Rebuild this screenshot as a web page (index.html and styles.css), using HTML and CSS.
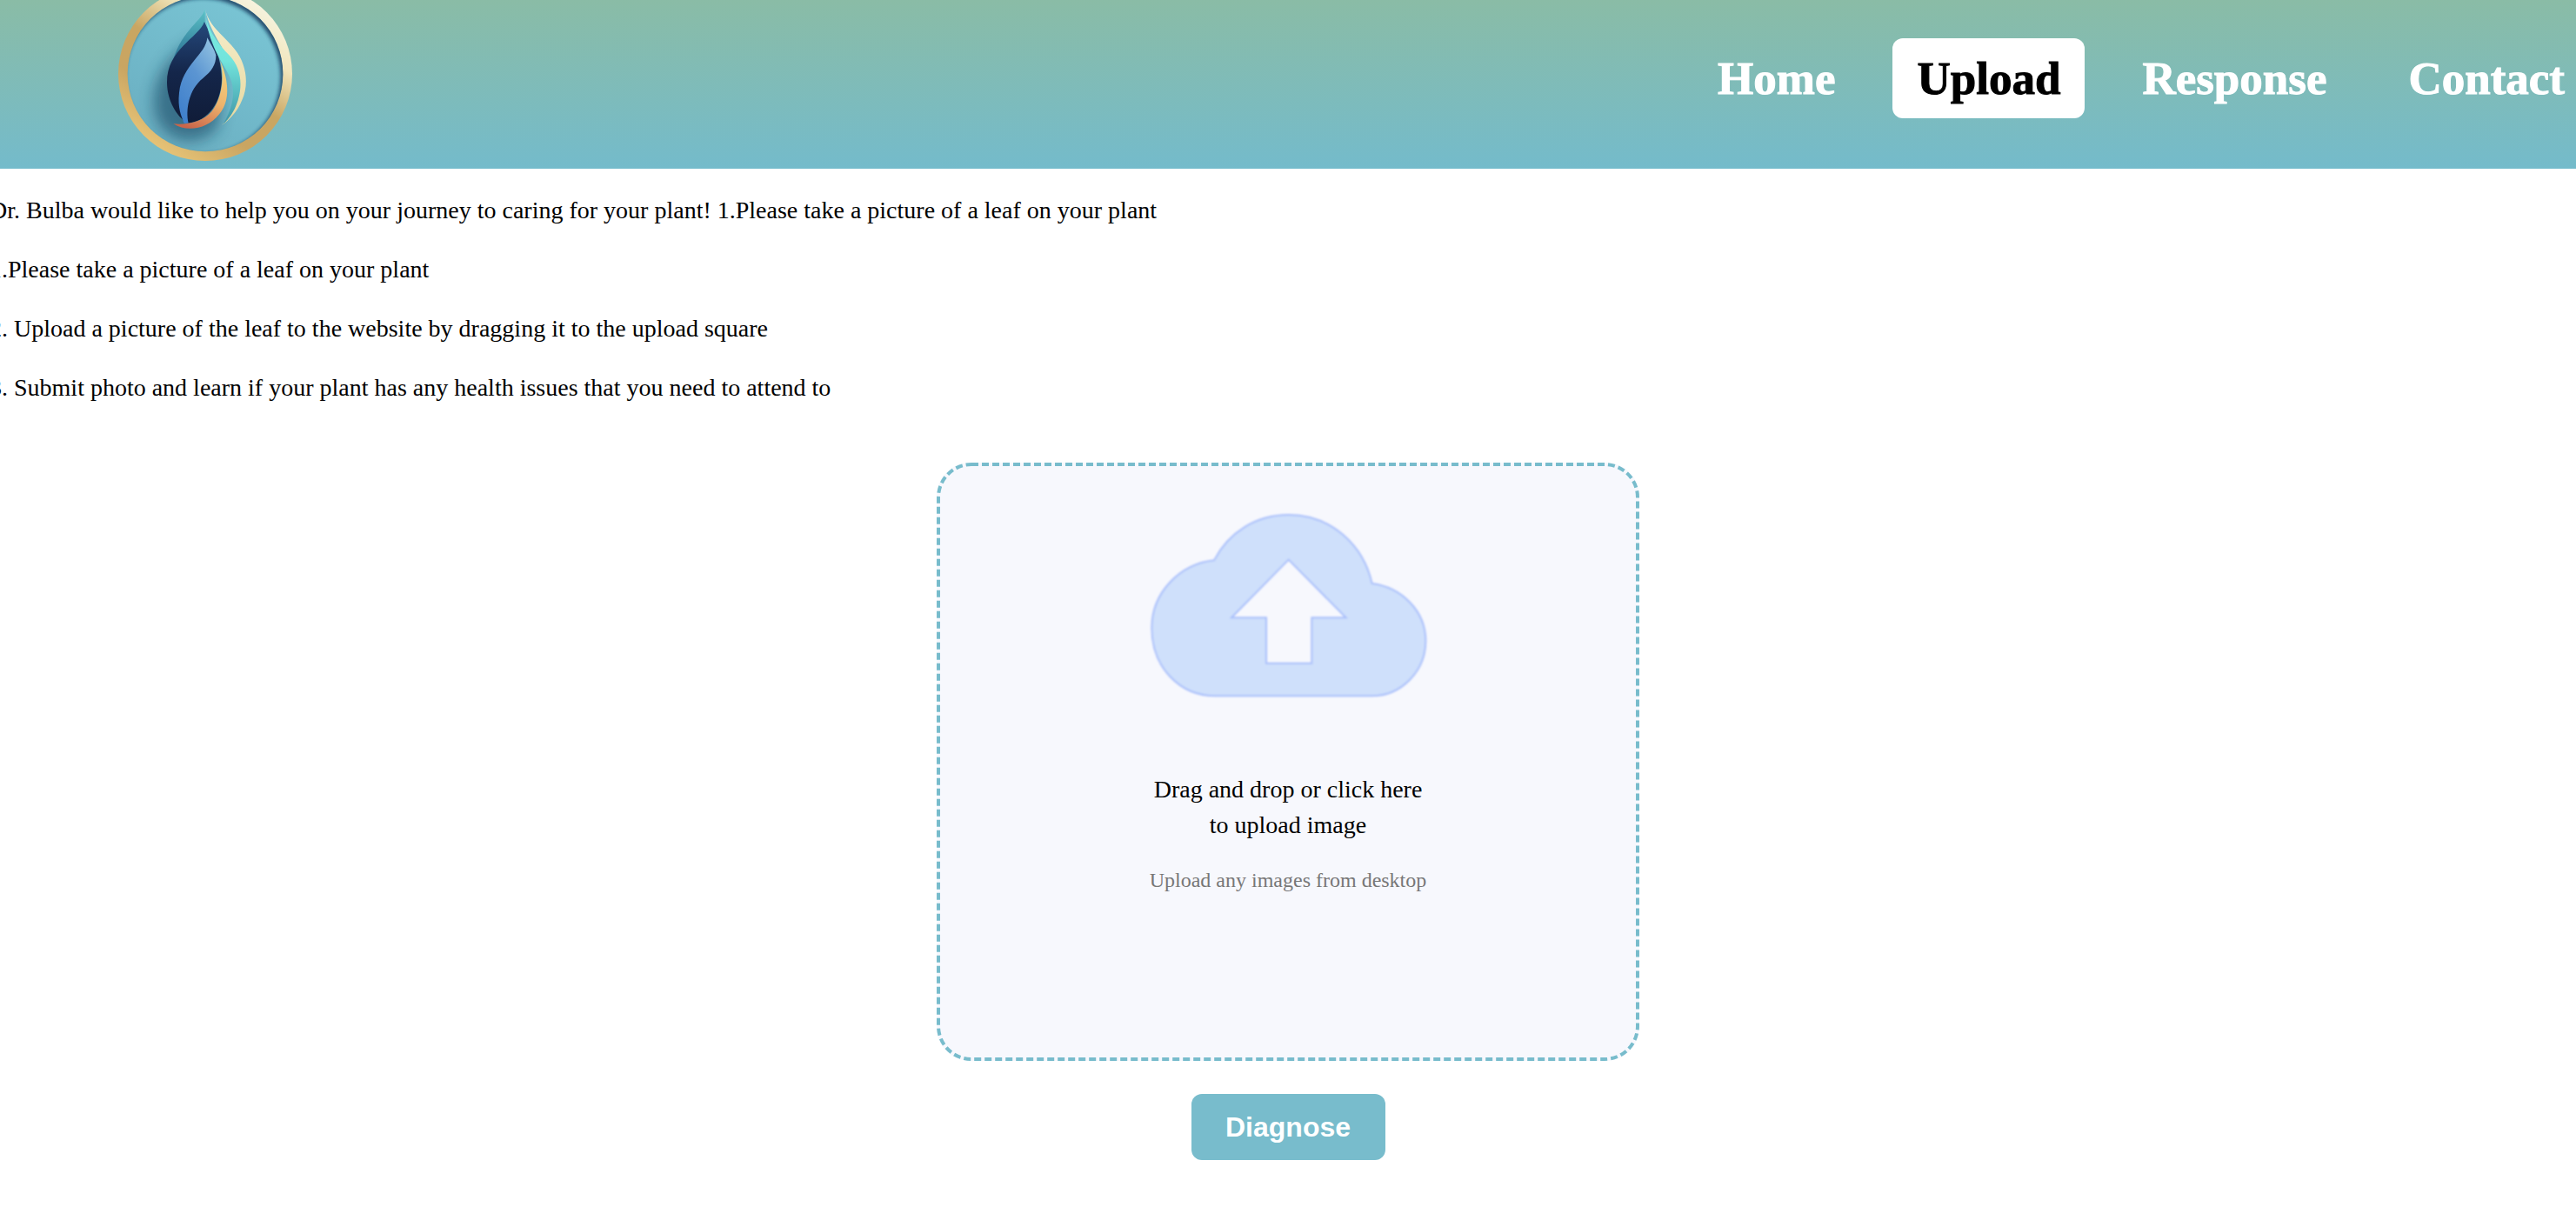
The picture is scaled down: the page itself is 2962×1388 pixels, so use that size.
FILE: index.html
```html
<!DOCTYPE html>
<html lang="en">
<head>
<meta charset="utf-8">
<title>Dr. Bulba - Upload</title>
<link rel="stylesheet" href="styles.css">
</head>
<body>
<header class="site-header">
  <svg class="logo" viewBox="108 -45 600 600" aria-label="Dr. Bulba logo">
    <defs>
      <linearGradient id="ringGrad" x1="0.85" y1="0" x2="0.2" y2="1">
        <stop offset="0" stop-color="#f8f9ee"/>
        <stop offset="0.28" stop-color="#f1e6bc"/>
        <stop offset="0.5" stop-color="#c9a662"/>
        <stop offset="0.7" stop-color="#c9a562"/>
        <stop offset="1" stop-color="#eecb7c"/>
      </linearGradient>
      <linearGradient id="discGrad" x1="0.8" y1="0" x2="0.2" y2="1">
        <stop offset="0" stop-color="#7ac6d5"/>
        <stop offset="1" stop-color="#6aaec1"/>
      </linearGradient>
      <linearGradient id="bodyGrad" x1="0" y1="0" x2="0" y2="1">
        <stop offset="0" stop-color="#25497c"/>
        <stop offset="0.5" stop-color="#14264a"/>
        <stop offset="1" stop-color="#101c38"/>
      </linearGradient>
      <linearGradient id="blueGrad" x1="0.8" y1="0" x2="0.2" y2="1">
        <stop offset="0" stop-color="#8fc0e0"/>
        <stop offset="0.45" stop-color="#5b95d2"/>
        <stop offset="1" stop-color="#3f80cc"/>
      </linearGradient>
      <linearGradient id="tealGrad" x1="0" y1="0" x2="0" y2="1">
        <stop offset="0" stop-color="#5cc4c8"/>
        <stop offset="1" stop-color="#2b6f92"/>
      </linearGradient>
      <linearGradient id="cyanGrad" x1="0" y1="0" x2="0" y2="1">
        <stop offset="0" stop-color="#7cece2"/>
        <stop offset="0.45" stop-color="#72e4dc"/>
        <stop offset="1" stop-color="#3f94a6"/>
      </linearGradient>
      <linearGradient id="creamGrad" x1="0" y1="0" x2="0" y2="1">
        <stop offset="0" stop-color="#f6efce"/>
        <stop offset="1" stop-color="#e6d8a0"/>
      </linearGradient>
      <linearGradient id="orangeGrad" x1="0.7" y1="0" x2="0.3" y2="1">
        <stop offset="0" stop-color="#f0d480"/>
        <stop offset="0.5" stop-color="#eeb36c"/>
        <stop offset="1" stop-color="#c9654a"/>
      </linearGradient>
      <filter id="softShadow" x="-50%" y="-50%" width="200%" height="200%">
        <feGaussianBlur stdDeviation="26"/>
      </filter>
      <filter id="rimShadow" x="-20%" y="-20%" width="140%" height="140%">
        <feGaussianBlur stdDeviation="6"/>
      </filter>
      <clipPath id="discClip"><circle cx="408" cy="255" r="268"/></clipPath>
    </defs>
    <circle cx="408" cy="255" r="300" fill="url(#ringGrad)"/>
    <circle cx="408" cy="255" r="268" fill="url(#discGrad)"/>
    <g clip-path="url(#discClip)">
      <path fill-rule="evenodd" fill="#16375c" opacity="0.85" filter="url(#rimShadow)" d="M60 -90 H760 V600 H60 Z M400 263 m-268 0 a268 268 0 1 0 536 0 a268 268 0 1 0 -536 0 Z"/>
      <path d="M400 130 C290 170 200 290 240 410 C290 510 400 500 450 440 C480 300 450 200 400 130Z" fill="#184562" opacity="0.6" filter="url(#softShadow)"/>
    </g>
    <path d="M407 30 C400 70 330 100 298 205 C330 145 390 115 407 85Z" fill="url(#tealGrad)"/>
    <path d="M405 75 C385 130 275 170 276 285 C277 350 310 400 345 425 C420 420 465 350 465 270 C465 200 430 130 405 75Z" fill="url(#bodyGrad)"/>
    <path d="M415 130 C410 190 330 220 318 320 C312 370 325 400 335 425 L350 425 C340 380 350 310 400 270 C430 245 445 225 445 190 C440 170 425 150 415 130Z" fill="url(#blueGrad)"/>
    <path d="M407 30 C420 90 470 120 510 170 C550 220 560 290 535 345 C520 385 490 415 465 432 C500 400 530 340 525 290 C520 220 430 140 407 30Z" fill="url(#creamGrad)"/>
    <path d="M407 30 C405 80 440 140 490 190 C530 230 535 285 525 330 C515 375 495 405 470 428 C505 370 515 310 490 260 C465 210 415 150 407 30Z" fill="url(#cyanGrad)"/>
    <path d="M460 210 C490 280 495 350 455 395 C420 440 350 460 298 427 C345 432 400 420 430 385 C465 340 475 270 460 210Z" fill="url(#orangeGrad)"/>
  </svg>
  <nav class="main-nav">
    <a class="nav-link" href="#">Home</a>
    <a class="nav-link is-active" href="#">Upload</a>
    <a class="nav-link" href="#">Response</a>
    <a class="nav-link" href="#">Contact</a>
  </nav>
</header>
<main class="page">
  <section class="intro">
    <p>Dr. Bulba would like to help you on your journey to caring for your plant! 1.Please take a picture of a leaf on your plant</p>
    <p>1.Please take a picture of a leaf on your plant</p>
    <p>2. Upload a picture of the leaf to the website by dragging it to the upload square</p>
    <p>3. Submit photo and learn if your plant has any health issues that you need to attend to</p>
  </section>
  <section class="dropzone">
    <svg class="dash-frame" viewBox="0 0 808 688">
      <rect x="2" y="2" width="804" height="684" rx="38" ry="38"/>
    </svg>
    <svg class="cloud" viewBox="0 0 1200 780">
      <defs>
        <filter id="cloudSoft" x="-5%" y="-5%" width="110%" height="110%"><feGaussianBlur stdDeviation="2.5"/></filter>
      </defs>
      <path class="cloud-shape" filter="url(#cloudSoft)" fill-rule="evenodd" d="M350 685 C225 685 130 585 130 450 C130 330 225 230 345 217 C395 120 490 60 602 60 C750 60 860 165 890 297 C990 310 1075 390 1075 495 C1075 600 990 685 890 685 Z M602 215 L405 415 H525 V572 H682 V415 H800 Z"/>
    </svg>
    <p class="drop-title">Drag and drop or click here<br>to upload image</p>
    <p class="drop-note">Upload any images from desktop</p>
  </section>
  <button class="diagnose" type="button">Diagnose</button>
</main>
</body>
</html>
```
FILE: styles.css
```css
html, body {
  margin: 0;
  padding: 0;
  height: 100%;
  overflow: hidden;
  background: #fff;
  color: #000;
  font-family: "Liberation Serif", "Times New Roman", serif;
}

.site-header {
  height: 194px;
  display: flex;
  justify-content: space-between;
  align-items: center;
  padding-left: 136px;
  background: linear-gradient(180deg, #8abca6 0%, #74bbcb 100%);
  overflow: hidden;
}

.logo {
  width: 200px;
  height: 200px;
  flex: none;
  margin-bottom: 24px;
}

.main-nav {
  display: flex;
  gap: 38px;
  margin-right: -15px;
  margin-bottom: 14px;
}

.nav-link {
  display: block;
  padding: 0 28px;
  height: 92px;
  line-height: 92px;
  border-radius: 12px;
  color: #fff;
  font-size: 53px;
  font-weight: 700;
  text-decoration: none;
  -webkit-text-stroke: 1px currentColor;
}

.nav-link.is-active {
  background: #fff;
  color: #000;
}

.page {
  display: flex;
  flex-direction: column;
  align-items: center;
}

.intro {
  align-self: flex-start;
  margin-left: -12px;
  padding-top: 26px;
  font-size: 28px;
  line-height: 44px;
}

.intro p {
  margin: 0 0 24px;
  white-space: nowrap;
}

.dropzone {
  position: relative;
  box-sizing: border-box;
  width: 808px;
  height: 688px;
  margin-top: 40px;
  padding-top: 40px;
  display: flex;
  flex-direction: column;
  align-items: center;
  background: #f7f8fd;
  border-radius: 38px;
}

.dash-frame {
  position: absolute;
  inset: 0;
  width: 100%;
  height: 100%;
}

.dash-frame rect {
  fill: none;
  stroke: #78bccc;
  stroke-width: 4;
  stroke-dasharray: 8 4;
}

.cloud {
  width: 400px;
  height: 260px;
  flex: none;
}

.cloud-shape {
  fill: #cfe0fb;
  stroke: #a9bffb;
  stroke-width: 6;
}

.drop-title {
  margin: 55px 0 0;
  font-size: 28px;
  line-height: 41px;
  text-align: center;
}

.drop-note {
  margin: 28px 0 0;
  font-size: 24px;
  line-height: 30px;
  color: #777;
  text-align: center;
}

.diagnose {
  width: 223px;
  height: 76px;
  margin-top: 38px;
  border: 0;
  border-radius: 12px;
  background: #78bccc;
  color: #fff;
  font-family: "Liberation Sans", Arial, sans-serif;
  font-size: 32px;
  font-weight: 700;
}
```
